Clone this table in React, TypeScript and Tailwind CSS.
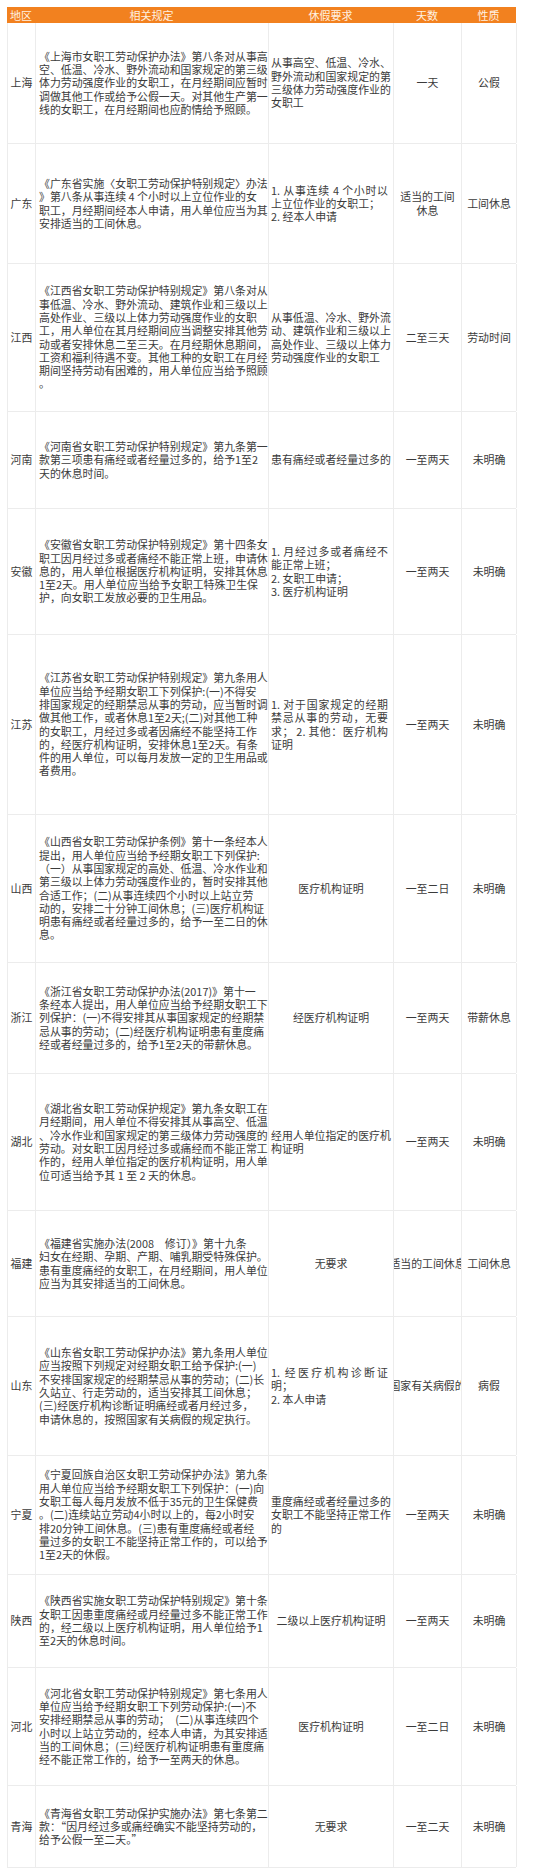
import React from "react";

type Line = string | { t: string; j?: boolean };

interface Row {
  region: string;
  h: string;
  law: string[];
  req: Line[];
  reqCenter?: boolean;
  days: string[];
  nature: string;
}

const rows: Row[] = [
  {
    region: "上海",
    h: "h-[121px]",
    law: [
      "《上海市女职工劳动保护办法》第八条对从事高",
      "空、低温、冷水、野外流动和国家规定的第三级",
      "体力劳动强度作业的女职工，在月经期间应暂时",
      "调做其他工作或给予公假一天。对其他生产第一",
      "线的女职工，在月经期间也应酌情给予照顾。",
    ],
    req: ["从事高空、低温、冷水、", "野外流动和国家规定的第", "三级体力劳动强度作业的", "女职工"],
    days: ["一天"],
    nature: "公假",
  },
  {
    region: "广东",
    h: "h-[120px]",
    law: [
      "《广东省实施〈女职工劳动保护特别规定〉办法",
      "》第八条从事连续 4 个小时以上立位作业的女",
      "职工，月经期间经本人申请，用人单位应当为其",
      "安排适当的工间休息。",
    ],
    req: [{ t: "1. 从事连续 4 个小时以", j: true }, "上立位作业的女职工；", "2. 经本人申请"],
    days: ["适当的工间", "休息"],
    nature: "工间休息",
  },
  {
    region: "江西",
    h: "h-[148px]",
    law: [
      "《江西省女职工劳动保护特别规定》第八条对从",
      "事低温、冷水、野外流动、建筑作业和三级以上",
      "高处作业、三级以上体力劳动强度作业的女职",
      "工，用人单位在其月经期间应当调整安排其他劳",
      "动或者安排休息二至三天。在月经期休息期间，",
      "工资和福利待遇不变。其他工种的女职工在月经",
      "期间坚持劳动有困难的，用人单位应当给予照顾",
      "。",
    ],
    req: ["从事低温、冷水、野外流", "动、建筑作业和三级以上", "高处作业、三级以上体力", "劳动强度作业的女职工"],
    days: ["二至三天"],
    nature: "劳动时间",
  },
  {
    region: "河南",
    h: "h-[97px]",
    law: [
      "《河南省女职工劳动保护特别规定》第九条第一",
      "款第三项患有痛经或者经量过多的，给予1至2",
      "天的休息时间。",
    ],
    req: ["患有痛经或者经量过多的"],
    days: ["一至两天"],
    nature: "未明确",
  },
  {
    region: "安徽",
    h: "h-[126px]",
    law: [
      "《安徽省女职工劳动保护特别规定》第十四条女",
      "职工因月经过多或者痛经不能正常上班，申请休",
      "息的，用人单位根据医疗机构证明，安排其休息",
      "1至2天。用人单位应当给予女职工特殊卫生保",
      "护，向女职工发放必要的卫生用品。",
    ],
    req: [{ t: "1. 月经过多或者痛经不", j: true }, "能正常上班；", "2. 女职工申请；", "3. 医疗机构证明"],
    days: ["一至两天"],
    nature: "未明确",
  },
  {
    region: "江苏",
    h: "h-[180px]",
    law: [
      "《江苏省女职工劳动保护特别规定》第九条用人",
      "单位应当给予经期女职工下列保护:(一)不得安",
      "排国家规定的经期禁忌从事的劳动，应当暂时调",
      "做其他工作，或者休息1至2天;(二)对其他工种",
      "的女职工，月经过多或者因痛经不能坚持工作",
      "的，经医疗机构证明，安排休息1至2天。有条",
      "件的用人单位，可以每月发放一定的卫生用品或",
      "者费用。",
    ],
    req: [
      { t: "1. 对于国家规定的经期", j: true },
      { t: "禁忌从事的劳动，无要", j: true },
      { t: "求； 2. 其他：医疗机构", j: true },
      "证明",
    ],
    days: ["一至两天"],
    nature: "未明确",
  },
  {
    region: "山西",
    h: "h-[148px]",
    law: [
      "《山西省女职工劳动保护条例》第十一条经本人",
      "提出，用人单位应当给予经期女职工下列保护:",
      "（一）从事国家规定的高处、低温、冷水作业和",
      "第三级以上体力劳动强度作业的，暂时安排其他",
      "合适工作；(二)从事连续四个小时以上站立劳",
      "动的，安排二十分钟工间休息；(三)医疗机构证",
      "明患有痛经或者经量过多的，给予一至二日的休",
      "息。",
    ],
    req: ["医疗机构证明"],
    reqCenter: true,
    days: ["一至二日"],
    nature: "未明确",
  },
  {
    region: "浙江",
    h: "h-[111px]",
    law: [
      "《浙江省女职工劳动保护办法(2017)》第十一",
      "条经本人提出，用人单位应当给予经期女职工下",
      "列保护：(一)不得安排其从事国家规定的经期禁",
      "忌从事的劳动；(二)经医疗机构证明患有重度痛",
      "经或者经量过多的，给予1至2天的带薪休息。",
    ],
    req: ["经医疗机构证明"],
    reqCenter: true,
    days: ["一至两天"],
    nature: "带薪休息",
  },
  {
    region: "湖北",
    h: "h-[137px]",
    law: [
      "《湖北省女职工劳动保护规定》第九条女职工在",
      "月经期间，用人单位不得安排其从事高空、低温",
      "、冷水作业和国家规定的第三级体力劳动强度的",
      "劳动。对女职工因月经过多或痛经而不能正常工",
      "作的，经用人单位指定的医疗机构证明，用人单",
      "位可适当给予其 1 至 2 天的休息。",
    ],
    req: ["经用人单位指定的医疗机", "构证明"],
    days: ["一至两天"],
    nature: "未明确",
  },
  {
    region: "福建",
    h: "h-[106px]",
    law: [
      "《福建省实施办法(2008　修订）》第十九条",
      "妇女在经期、孕期、产期、哺乳期受特殊保护。",
      "患有重度痛经的女职工，在月经期间，用人单位",
      "应当为其安排适当的工间休息。",
    ],
    req: ["无要求"],
    reqCenter: true,
    days: ["适当的工间休息"],
    nature: "工间休息",
  },
  {
    region: "山东",
    h: "h-[139px]",
    law: [
      "《山东省女职工劳动保护办法》第九条用人单位",
      "应当按照下列规定对经期女职工给予保护:(一)",
      "不安排国家规定的经期禁忌从事的劳动；(二)长",
      "久站立、行走劳动的，适当安排其工间休息；",
      "(三)经医疗机构诊断证明痛经或者月经过多，",
      "申请休息的，按照国家有关病假的规定执行。",
    ],
    req: [{ t: "1. 经医疗机构诊断证", j: true }, "明；", "2. 本人申请"],
    days: ["国家有关病假的"],
    nature: "病假",
  },
  {
    region: "宁夏",
    h: "h-[119px]",
    law: [
      "《宁夏回族自治区女职工劳动保护办法》第九条",
      "用人单位应当给予经期女职工下列保护：(一)向",
      "女职工每人每月发放不低于35元的卫生保健费",
      "。(二)连续站立劳动4小时以上的，每2小时安",
      "排20分钟工间休息。(三)患有重度痛经或者经",
      "量过多的女职工不能坚持正常工作的，可以给予",
      "1至2天的休假。",
    ],
    req: ["重度痛经或者经量过多的", "女职工不能坚持正常工作", "的"],
    days: ["一至两天"],
    nature: "未明确",
  },
  {
    region: "陕西",
    h: "h-[93px]",
    law: [
      "《陕西省实施女职工劳动保护特别规定》第十条",
      "女职工因患重度痛经或月经量过多不能正常工作",
      "的，经二级以上医疗机构证明，用人单位给予1",
      "至2天的休息时间。",
    ],
    req: ["二级以上医疗机构证明"],
    reqCenter: true,
    days: ["一至两天"],
    nature: "未明确",
  },
  {
    region: "河北",
    h: "h-[118px]",
    law: [
      "《河北省女职工劳动保护特别规定》第七条用人",
      "单位应当给予经期女职工下列劳动保护:(一)不",
      "安排经期禁忌从事的劳动；　(二)从事连续四个",
      "小时以上站立劳动的，经本人申请，为其安排适",
      "当的工间休息；(三)经医疗机构证明患有重度痛",
      "经不能正常工作的，给予一至两天的休息。",
    ],
    req: ["医疗机构证明"],
    reqCenter: true,
    days: ["一至二日"],
    nature: "未明确",
  },
  {
    region: "青海",
    h: "h-[82px]",
    law: [
      "《青海省女职工劳动保护实施办法》第七条第二",
      "款：“因月经过多或痛经确实不能坚持劳动的，",
      "给予公假一至二天。”",
    ],
    req: ["无要求"],
    reqCenter: true,
    days: ["一至二天"],
    nature: "未明确",
  },
];

const cols = "grid grid-cols-[28px_233px_125px_68px_55px]";

function ReqLine({ line }: { line: Line }) {
  if (typeof line === "string") {
    return <div className="whitespace-nowrap">{line}</div>;
  }
  return (
    <div className="w-[117px] whitespace-nowrap text-justify [text-align-last:justify]">{line.t}</div>
  );
}

export default function App() {
  return (
    <div className="w-[550px] h-[1876px] bg-white pt-[7px] pl-[7px] font-['Noto_Sans_CJK_SC',sans-serif] text-[10.9px] leading-[13.3px] text-[#3b3b3b]">
      <div className="w-[509px]">
        <div className={`${cols} h-[16px] bg-[#f2811f] text-[#fff1e2] text-[11px] leading-[16px]`}>
          <div className="text-center">地区</div>
          <div className="text-center">相关规定</div>
          <div className="text-center">休假要求</div>
          <div className="text-center">天数</div>
          <div className="text-center">性质</div>
        </div>
        {rows.map((r) => (
          <div key={r.region} className={`${cols} ${r.h} border-b border-l border-[#ececec]`}>
            <div className="flex items-center justify-center border-r border-[#ececec] whitespace-nowrap">
              {r.region}
            </div>
            <div className="flex flex-col justify-center border-r border-[#ececec] pl-[3px] overflow-hidden">
              {r.law.map((l, i) => (
                <div key={i} className="whitespace-nowrap">
                  {l}
                </div>
              ))}
            </div>
            <div
              className={`flex flex-col justify-center border-r border-[#ececec] overflow-hidden ${
                r.reqCenter ? "items-center" : "items-start pl-[2px]"
              }`}
            >
              {r.req.map((l, i) => (
                <ReqLine key={i} line={l} />
              ))}
            </div>
            <div className="flex flex-col items-center justify-center border-r border-[#ececec] overflow-hidden">
              {r.days.map((d, i) => (
                <div key={i} className="whitespace-nowrap">
                  {d}
                </div>
              ))}
            </div>
            <div className="flex items-center justify-center border-r border-[#ececec] whitespace-nowrap overflow-hidden">
              {r.nature}
            </div>
          </div>
        ))}
      </div>
    </div>
  );
}
